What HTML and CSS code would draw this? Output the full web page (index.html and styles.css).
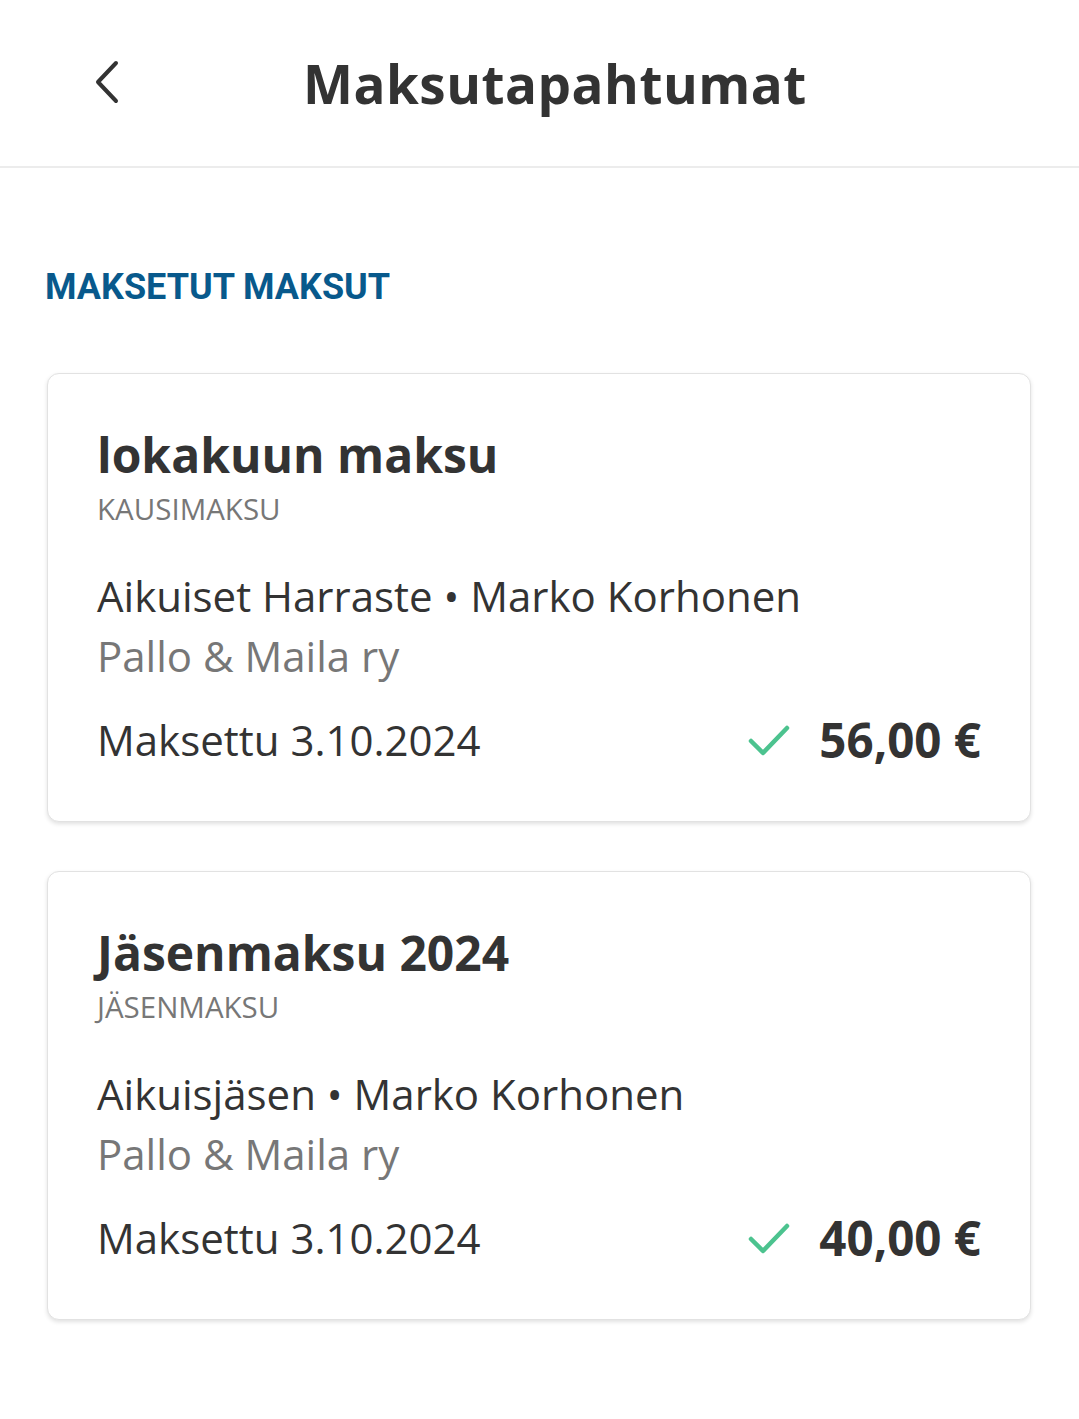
FILE: index.html
```html
<!DOCTYPE html>
<html lang="fi">
<head>
    <meta charset="UTF-8">
    <meta name="viewport" content="width=device-width, initial-scale=1.0">
    <title>Maksutapahtumat</title>
    <link rel="stylesheet" href="styles.css">
</head>
<body>

<header class="topbar">
    <button class="back" aria-label="Takaisin">
        <svg width="40" height="50" viewBox="0 0 40 50">
            <path d="M28 6 L10 25 L28 44" fill="none" stroke="#333" stroke-width="4" stroke-linecap="round" stroke-linejoin="round"/>
        </svg>
    </button>
    <h1>Maksutapahtumat</h1>
</header>

<main>
    <h2 class="section-title">MAKSETUT MAKSUT</h2>

    <div class="payment">
        <h3>lokakuun maksu</h3>
        <div class="type">KAUSIMAKSU</div>
        <div class="who">Aikuiset Harraste • Marko Korhonen</div>
        <div class="org">Pallo &amp; Maila ry</div>
        <div class="bottom">
            <span class="date">Maksettu 3.10.2024</span>
            <span class="amount">
                <svg width="46" height="38" viewBox="0 0 46 38">
                    <path d="M4 20 L16 32 L40 7" fill="none" stroke="#4cc38f" stroke-width="4.5" stroke-linecap="round" stroke-linejoin="round"/>
                </svg>
                56,00 €
            </span>
        </div>
    </div>

    <div class="payment">
        <h3>Jäsenmaksu 2024</h3>
        <div class="type">JÄSENMAKSU</div>
        <div class="who">Aikuisjäsen • Marko Korhonen</div>
        <div class="org">Pallo &amp; Maila ry</div>
        <div class="bottom">
            <span class="date">Maksettu 3.10.2024</span>
            <span class="amount">
                <svg width="46" height="38" viewBox="0 0 46 38">
                    <path d="M4 20 L16 32 L40 7" fill="none" stroke="#4cc38f" stroke-width="4.5" stroke-linecap="round" stroke-linejoin="round"/>
                </svg>
                40,00 €
            </span>
        </div>
    </div>
</main>

</body>
</html>
```

FILE: styles.css
```css
body {
    font-family: "Open Sans", sans-serif;
    margin: 0;
    padding: 0;
    background-color: #fff;
    color: #333;
}
.topbar {
    height: 166px;
    border-bottom: 2px solid #ececec;
    display: flex;
    align-items: center;
    padding-left: 88px;
}
.back {
    background: none;
    border: 0;
    padding: 0;
    width: 40px;
    height: 50px;
    margin-top: -2px;
}
.topbar h1 {
    margin: 0 0 0 175px;
    font-size: 53px;
    font-weight: 700;
    letter-spacing: 0.5px;
}
main {
    padding: 98px 48px 40px 47px;
}
.section-title {
    font-family: Roboto, sans-serif;
    font-weight: 700;
    font-size: 36px;
    color: #08598c;
    margin: 0 0 65px -2px;
}
.payment {
    background: #fff;
    border: 1px solid #e2e2e2;
    border-radius: 12px;
    box-shadow: 0 2px 4px rgba(0, 0, 0, 0.12);
    padding: 51px 49px 49px 49px;
    margin-bottom: 49px;
}
.payment h3 {
    margin: 0;
    font-size: 48px;
    font-weight: 700;
    line-height: 60px;
}
.type {
    font-size: 29.5px;
    color: #777;
    line-height: 38px;
    margin-top: 5px;
}
.who {
    font-size: 42px;
    margin-top: 38px;
    line-height: 60px;
}
.org {
    font-size: 42px;
    color: #777;
    line-height: 60px;
}
.bottom {
    display: flex;
    justify-content: space-between;
    align-items: center;
    margin-top: 21px;
}
.date {
    font-size: 42px;
    line-height: 60px;
}
.amount {
    display: flex;
    align-items: center;
    gap: 26px;
    font-size: 47.5px;
    font-weight: 700;
}
```
